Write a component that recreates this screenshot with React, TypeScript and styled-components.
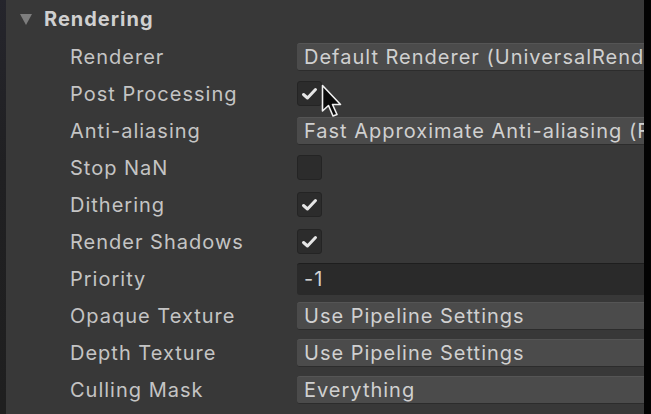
import React from "react";
import styled, { createGlobalStyle } from "styled-components";

const Global = createGlobalStyle`
  html, body { margin: 0; padding: 0; background: #383838; overflow: hidden; }
  #root { width: 651px; height: 414px; }
`;

const Frame = styled.div`
  display: flex;
  width: 651px;
  height: 414px;
  overflow: hidden;
  font-family: Inter, "Noto Sans", sans-serif;
  letter-spacing: 1px;
`;

const LeftStrip = styled.div`
  width: 6px;
  flex: none;
  background: linear-gradient(#25252c, #202022 40%, #1f1f1f);
`;

const RightStrip = styled.div`
  width: 7px;
  flex: none;
  background: #030303;
`;

const Panel = styled.div`
  flex: 1;
  min-width: 0;
  background: #383838;
  display: flex;
  flex-direction: column;
  overflow: hidden;
  position: relative;
`;

const Header = styled.div`
  height: 38px;
  flex: none;
  display: flex;
  align-items: center;
  padding-left: 14px;
  gap: 12px;
  color: #d0d0d0;
  font-size: 20px;
  font-weight: 700;
`;

const Row = styled.div`
  height: 37px;
  flex: none;
  display: grid;
  grid-template-columns: 227px 1fr;
  align-items: center;
  padding-left: 64px;
`;

const Label = styled.div`
  color: #c4c4c4;
  font-size: 20px;
  white-space: nowrap;
`;

const Dropdown = styled.div`
  height: 28px;
  margin-right: -20px;
  border-radius: 3px;
  background: #4b4b4b;
  border-top: 1px solid #555555;
  border-bottom: 1px solid #2c2c2c;
  box-sizing: border-box;
  display: flex;
  align-items: center;
  padding-left: 7px;
  color: #d0d0d0;
  font-size: 20px;
  white-space: nowrap;
  overflow: hidden;
`;

const TextField = styled.div`
  height: 32px;
  margin-right: -20px;
  border-radius: 3px;
  background: #2a2a2a;
  border-top: 1px solid #1e1e1e;
  box-sizing: border-box;
  display: flex;
  align-items: center;
  padding-left: 7px;
  color: #d2d2d2;
  font-size: 20px;
`;

const Box = styled.div`
  width: 25px;
  height: 25px;
  box-sizing: border-box;
  border-radius: 3px;
  background: #2c2c2c;
  border: 1px solid #242424;
  display: flex;
  align-items: center;
  justify-content: center;
`;

const Cursor = styled.svg`
  position: absolute;
  left: 315px;
  top: 84px;
`;

const Check = () => (
  <svg width="17" height="14" viewBox="0 0 17 14">
    <path d="M2.5 7.5 L6.5 11 L14.5 2.5" fill="none" stroke="#e6e6e6" strokeWidth="3" strokeLinecap="round" strokeLinejoin="round" />
  </svg>
);

type Field =
  | { kind: "dropdown"; value: string }
  | { kind: "text"; value: string }
  | { kind: "check"; checked: boolean };

const rows: { label: string; field: Field }[] = [
  { label: "Renderer", field: { kind: "dropdown", value: "Default Renderer (UniversalRenderPipelineAsset_Renderer)" } },
  { label: "Post Processing", field: { kind: "check", checked: true } },
  { label: "Anti-aliasing", field: { kind: "dropdown", value: "Fast Approximate Anti-aliasing (FXAA)" } },
  { label: "Stop NaN", field: { kind: "check", checked: false } },
  { label: "Dithering", field: { kind: "check", checked: true } },
  { label: "Render Shadows", field: { kind: "check", checked: true } },
  { label: "Priority", field: { kind: "text", value: "-1" } },
  { label: "Opaque Texture", field: { kind: "dropdown", value: "Use Pipeline Settings" } },
  { label: "Depth Texture", field: { kind: "dropdown", value: "Use Pipeline Settings" } },
  { label: "Culling Mask", field: { kind: "dropdown", value: "Everything" } },
  { label: "Occlusion Culling", field: { kind: "check", checked: false } },
];

const renderField = (f: Field) => {
  if (f.kind === "dropdown") return <Dropdown>{f.value}</Dropdown>;
  if (f.kind === "text") return <TextField>{f.value}</TextField>;
  return <Box>{f.checked ? <Check /> : null}</Box>;
};

export default function App() {
  return (
    <>
      <Global />
      <Frame>
        <LeftStrip />
        <Panel>
          <Header>
            <svg width="12" height="11" viewBox="0 0 12 11">
              <path d="M0 0 H12 L6 11 Z" fill="#7d7d7d" />
            </svg>
            Rendering
          </Header>
          {rows.map((r) => (
            <Row key={r.label}>
              <Label>{r.label}</Label>
              {renderField(r.field)}
            </Row>
          ))}
          <Cursor width="22" height="36" viewBox="0 0 22 36">
            <path d="M1.5 1.5 L1.5 27 L7.5 21.5 L12 32 L16 30.5 L11.5 20.5 L19.5 20.5 Z" fill="#0a0a0a" stroke="#f0f0f0" strokeWidth="1.6" strokeLinejoin="round" />
          </Cursor>
        </Panel>
        <RightStrip />
      </Frame>
    </>
  );
}
